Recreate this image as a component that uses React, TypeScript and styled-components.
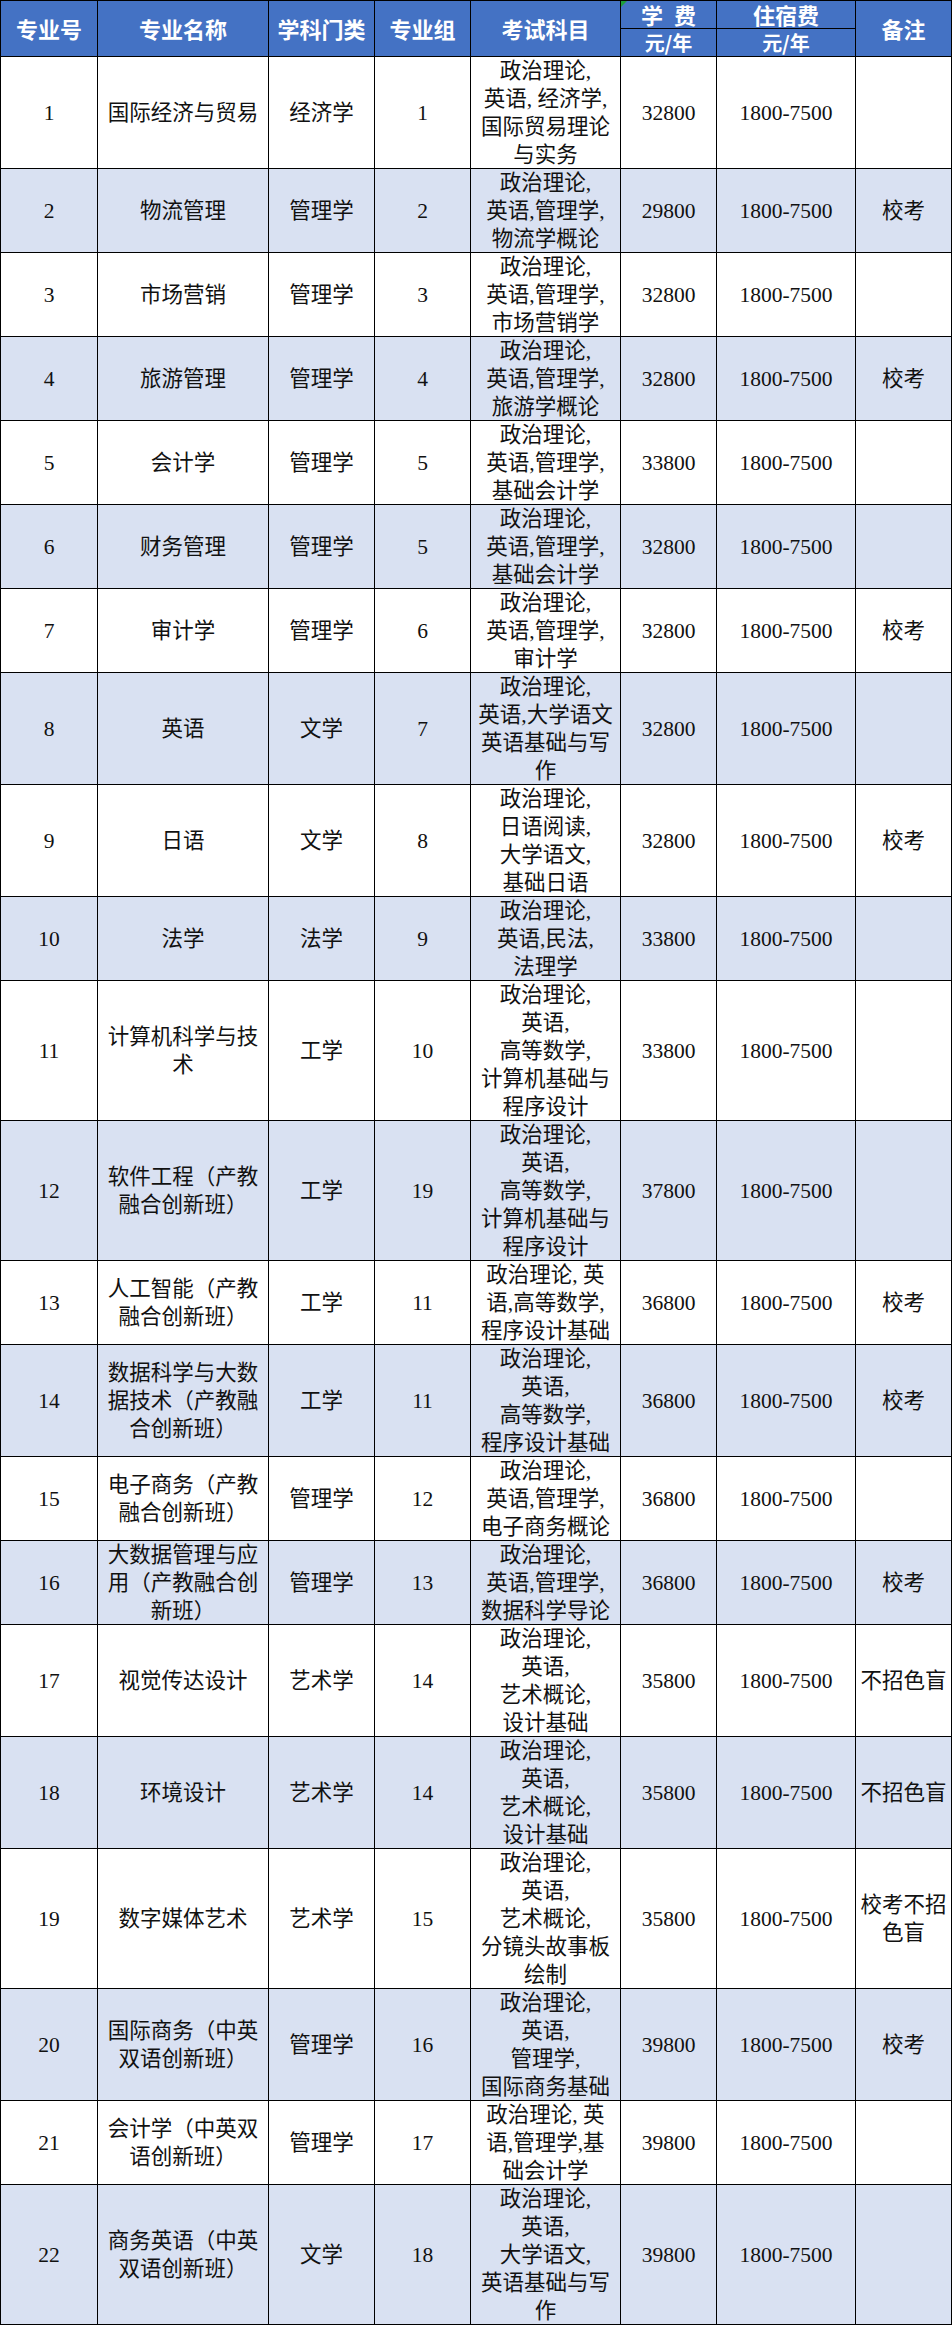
import React from "react";
import styled, { createGlobalStyle } from "styled-components";

const GlobalStyle = createGlobalStyle`
  html, body {
    margin: 0;
    padding: 0;
    background: #ffffff;
  }
  body {
    font-family: "Liberation Serif", "Noto Sans CJK SC", serif;
  }
`;

const LINE = 28;

type Row = {
  no: string;
  name: string;
  cat: string;
  group: string;
  exam: string;
  fee: string;
  dorm: string;
  note: string;
  lines: number;
};

const rows: Row[] = [
  { no: "1", name: "国际经济与贸易", cat: "经济学", group: "1", exam: "政治理论,\n英语, 经济学,\n国际贸易理论\n与实务", fee: "32800", dorm: "1800-7500", note: "", lines: 4 },
  { no: "2", name: "物流管理", cat: "管理学", group: "2", exam: "政治理论,\n英语,管理学,\n物流学概论", fee: "29800", dorm: "1800-7500", note: "校考", lines: 3 },
  { no: "3", name: "市场营销", cat: "管理学", group: "3", exam: "政治理论,\n英语,管理学,\n市场营销学", fee: "32800", dorm: "1800-7500", note: "", lines: 3 },
  { no: "4", name: "旅游管理", cat: "管理学", group: "4", exam: "政治理论,\n英语,管理学,\n旅游学概论", fee: "32800", dorm: "1800-7500", note: "校考", lines: 3 },
  { no: "5", name: "会计学", cat: "管理学", group: "5", exam: "政治理论,\n英语,管理学,\n基础会计学", fee: "33800", dorm: "1800-7500", note: "", lines: 3 },
  { no: "6", name: "财务管理", cat: "管理学", group: "5", exam: "政治理论,\n英语,管理学,\n基础会计学", fee: "32800", dorm: "1800-7500", note: "", lines: 3 },
  { no: "7", name: "审计学", cat: "管理学", group: "6", exam: "政治理论,\n英语,管理学,\n审计学", fee: "32800", dorm: "1800-7500", note: "校考", lines: 3 },
  { no: "8", name: "英语", cat: "文学", group: "7", exam: "政治理论,\n英语,大学语文\n英语基础与写\n作", fee: "32800", dorm: "1800-7500", note: "", lines: 4 },
  { no: "9", name: "日语", cat: "文学", group: "8", exam: "政治理论,\n日语阅读,\n大学语文,\n基础日语", fee: "32800", dorm: "1800-7500", note: "校考", lines: 4 },
  { no: "10", name: "法学", cat: "法学", group: "9", exam: "政治理论,\n英语,民法,\n法理学", fee: "33800", dorm: "1800-7500", note: "", lines: 3 },
  { no: "11", name: "计算机科学与技\n术", cat: "工学", group: "10", exam: "政治理论,\n英语,\n高等数学,\n计算机基础与\n程序设计", fee: "33800", dorm: "1800-7500", note: "", lines: 5 },
  { no: "12", name: "软件工程（产教\n融合创新班）", cat: "工学", group: "19", exam: "政治理论,\n英语,\n高等数学,\n计算机基础与\n程序设计", fee: "37800", dorm: "1800-7500", note: "", lines: 5 },
  { no: "13", name: "人工智能（产教\n融合创新班）", cat: "工学", group: "11", exam: "政治理论, 英\n语,高等数学,\n程序设计基础", fee: "36800", dorm: "1800-7500", note: "校考", lines: 3 },
  { no: "14", name: "数据科学与大数\n据技术（产教融\n合创新班）", cat: "工学", group: "11", exam: "政治理论,\n英语,\n高等数学,\n程序设计基础", fee: "36800", dorm: "1800-7500", note: "校考", lines: 4 },
  { no: "15", name: "电子商务（产教\n融合创新班）", cat: "管理学", group: "12", exam: "政治理论,\n英语,管理学,\n电子商务概论", fee: "36800", dorm: "1800-7500", note: "", lines: 3 },
  { no: "16", name: "大数据管理与应\n用（产教融合创\n新班）", cat: "管理学", group: "13", exam: "政治理论,\n英语,管理学,\n数据科学导论", fee: "36800", dorm: "1800-7500", note: "校考", lines: 3 },
  { no: "17", name: "视觉传达设计", cat: "艺术学", group: "14", exam: "政治理论,\n英语,\n艺术概论,\n设计基础", fee: "35800", dorm: "1800-7500", note: "不招色盲", lines: 4 },
  { no: "18", name: "环境设计", cat: "艺术学", group: "14", exam: "政治理论,\n英语,\n艺术概论,\n设计基础", fee: "35800", dorm: "1800-7500", note: "不招色盲", lines: 4 },
  { no: "19", name: "数字媒体艺术", cat: "艺术学", group: "15", exam: "政治理论,\n英语,\n艺术概论,\n分镜头故事板\n绘制", fee: "35800", dorm: "1800-7500", note: "校考不招\n色盲", lines: 5 },
  { no: "20", name: "国际商务（中英\n双语创新班）", cat: "管理学", group: "16", exam: "政治理论,\n英语,\n管理学,\n国际商务基础", fee: "39800", dorm: "1800-7500", note: "校考", lines: 4 },
  { no: "21", name: "会计学（中英双\n语创新班）", cat: "管理学", group: "17", exam: "政治理论, 英\n语,管理学,基\n础会计学", fee: "39800", dorm: "1800-7500", note: "", lines: 3 },
  { no: "22", name: "商务英语（中英\n双语创新班）", cat: "文学", group: "18", exam: "政治理论,\n英语,\n大学语文,\n英语基础与写\n作", fee: "39800", dorm: "1800-7500", note: "", lines: 5 },
];

const colWidths = [97, 171, 106, 96, 150, 96, 139, 96];

const Page = styled.div`
  width: 952px;
  background: #ffffff;
`;

const Table = styled.table`
  width: 952px;
  border-collapse: collapse;
  table-layout: fixed;
  border: 1px solid #000;
`;

const HeadCell = styled.th<{ $sub?: boolean }>`
  position: relative;
  background: #4472c4;
  color: #ffffff;
  border: 1px solid #000;
  padding: 0;
  font-family: "Noto Sans CJK SC", "Liberation Sans", sans-serif;
  font-weight: 700;
  font-size: ${(p) => (p.$sub ? "20px" : "22px")};
  text-align: center;
  vertical-align: middle;
  white-space: pre;
`;

const HeadText = styled.div<{ $tall?: boolean }>`
  height: ${(p) => (p.$tall ? LINE * 2 - 1 : LINE - 1)}px;
  line-height: ${(p) => (p.$tall ? LINE * 2 - 1 : LINE - 1)}px;
  overflow: visible;
`;

const CornerMark = styled.span`
  position: absolute;
  left: 0;
  top: 0;
  width: 0;
  height: 0;
  border-top: 6px solid #1e9e3a;
  border-right: 6px solid transparent;
`;

const BodyRow = styled.tr<{ $shade: boolean; $lines: number }>`
  height: ${(p) => p.$lines * LINE - 1}px;
  background: ${(p) => (p.$shade ? "#d9e1f2" : "#ffffff")};
`;

const Cell = styled.td`
  border: 1px solid #000;
  padding: 0;
  color: #111;
  font-family: "Liberation Serif", "Noto Sans CJK SC", serif;
  font-size: 21.5px;
  text-align: center;
  vertical-align: middle;
  white-space: pre;
`;

const Stack = styled.div<{ $max: number }>`
  display: flex;
  flex-direction: column;
  justify-content: center;
  max-height: ${(p) => p.$max}px;
  overflow: visible;
`;

const Line = styled.div`
  flex: 0 0 ${LINE}px;
  height: ${LINE}px;
  line-height: ${LINE}px;
`;

function Lines({ text, rowLines }: { text: string; rowLines: number }) {
  if (!text) return null;
  const parts = text.split("\n");
  return (
    <Stack $max={rowLines * LINE - 1}>
      {parts.map((t, i) => (
        <Line key={i}>{t}</Line>
      ))}
    </Stack>
  );
}

export default function App() {
  return (
    <Page>
      <GlobalStyle />
      <Table>
        <colgroup>
          {colWidths.map((w, i) => (
            <col key={i} style={{ width: w }} />
          ))}
        </colgroup>
        <thead>
          <tr>
            <HeadCell rowSpan={2}><HeadText $tall>专业号</HeadText></HeadCell>
            <HeadCell rowSpan={2}><HeadText $tall>专业名称</HeadText></HeadCell>
            <HeadCell rowSpan={2}><HeadText $tall>学科门类</HeadText></HeadCell>
            <HeadCell rowSpan={2}><HeadText $tall>专业组</HeadText></HeadCell>
            <HeadCell rowSpan={2}><HeadText $tall>考试科目</HeadText></HeadCell>
            <HeadCell>
              <CornerMark />
              <HeadText>{"学\u2002费"}</HeadText>
            </HeadCell>
            <HeadCell><HeadText>住宿费</HeadText></HeadCell>
            <HeadCell rowSpan={2}><HeadText $tall>备注</HeadText></HeadCell>
          </tr>
          <tr>
            <HeadCell $sub><HeadText>元/年</HeadText></HeadCell>
            <HeadCell $sub><HeadText>元/年</HeadText></HeadCell>
          </tr>
        </thead>
        <tbody>
          {rows.map((r, i) => (
            <BodyRow key={r.no} $shade={i % 2 === 1} $lines={r.lines}>
              <Cell><Lines text={r.no} rowLines={r.lines} /></Cell>
              <Cell><Lines text={r.name} rowLines={r.lines} /></Cell>
              <Cell><Lines text={r.cat} rowLines={r.lines} /></Cell>
              <Cell><Lines text={r.group} rowLines={r.lines} /></Cell>
              <Cell><Lines text={r.exam} rowLines={r.lines} /></Cell>
              <Cell><Lines text={r.fee} rowLines={r.lines} /></Cell>
              <Cell><Lines text={r.dorm} rowLines={r.lines} /></Cell>
              <Cell><Lines text={r.note} rowLines={r.lines} /></Cell>
            </BodyRow>
          ))}
        </tbody>
      </Table>
    </Page>
  );
}
